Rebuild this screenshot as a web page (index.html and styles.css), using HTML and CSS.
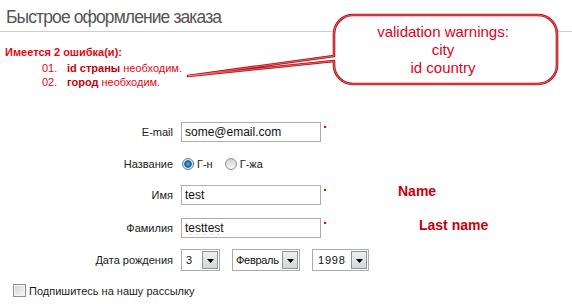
FILE: index.html
```html
<!DOCTYPE html>
<html>
<head>
    <meta charset="utf-8" />
    <title>Быстрое оформление заказа</title>
    <link rel="stylesheet" href="styles.css">
</head>
<body>
    <div class="page">
        <h1 class="title">Быстрое оформление заказа</h1>

        <div class="errors">
            <div class="errors-head">Имеется 2 ошибка(и):</div>
            <ol class="errors-list">
                <li><span class="num">01.</span><b>id страны</b> необходим.</li>
                <li><span class="num">02.</span><b>город</b> необходим.</li>
            </ol>
        </div>

        <form class="form">
            <div class="row">
                <label class="lbl">E-mail</label>
                <input class="inp" type="text" value="some@email.com">
                <span class="req"></span>
            </div>
            <div class="row row-radio">
                <label class="lbl">Название</label>
                <input class="radio" type="radio" name="title" checked>
                <span class="radio-text">Г-н</span>
                <input class="radio radio-second" type="radio" name="title">
                <span class="radio-text">Г-жа</span>
            </div>
            <div class="row">
                <label class="lbl">Имя</label>
                <input class="inp" type="text" value="test">
                <span class="req"></span>
                <span class="note note-name">Name</span>
            </div>
            <div class="row">
                <label class="lbl">Фамилия</label>
                <input class="inp inp-misspelled" type="text" value="testtest">
                <span class="req"></span>
                <span class="note note-last">Last name</span>
            </div>
            <div class="row row-date">
                <label class="lbl">Дата рождения</label>
                <span class="sel sel-day">
                    <select><option>3</option></select>
                    <span class="sel-btn"><svg width="7" height="4" viewBox="0 0 7 4"><path d="M0 0H7L3.5 4Z" fill="#000"/></svg></span>
                </span>
                <span class="sel sel-month">
                    <select class="month"><option>Февраль</option></select>
                    <span class="sel-btn"><svg width="7" height="4" viewBox="0 0 7 4"><path d="M0 0H7L3.5 4Z" fill="#000"/></svg></span>
                </span>
                <span class="sel sel-year">
                    <select class="digits"><option>1998</option></select>
                    <span class="sel-btn"><svg width="7" height="4" viewBox="0 0 7 4"><path d="M0 0H7L3.5 4Z" fill="#000"/></svg></span>
                </span>
            </div>
            <div class="subscribe">
                <input class="check" type="checkbox">
                <span>Подпишитесь на нашу рассылку</span>
            </div>
        </form>

        <!-- выноска поверх страницы -->
        <svg class="callout" viewBox="180 8 384 82">
            <path class="callout-shape" d="M353 15H538A19 19 0 0 1 557 34V65A19 19 0 0 1 538 84H353A19 19 0 0 1 334 65V61L188 76L334 56V34A19 19 0 0 1 353 15Z"/>
            <path class="callout-inner" d="M353 15H538A19 19 0 0 1 557 34V65A19 19 0 0 1 538 84H353A19 19 0 0 1 334 65V61L188 76L334 56V34A19 19 0 0 1 353 15Z"/>
            <text class="callout-text" x="443" y="37">validation warnings:</text>
            <text class="callout-text" x="443" y="55">city</text>
            <text class="callout-text" x="443" y="72.5">id country</text>
        </svg>
    </div>
</body>
</html>
```

FILE: styles.css
```css
body {
    margin: 0;
    background: #fff;
    font-family: "Liberation Sans", Arial, sans-serif;
    font-size: 11px;
    color: #1a1a1a;
}

.page {
    position: relative;
    width: 572px;
    height: 304px;
    overflow: hidden;
}

.title {
    margin: 0;
    height: 32px;
    box-sizing: border-box;
    padding: 6px 0 0 6px;
    border-bottom: 1px solid #cdcdcd;
    font-size: 17.5px;
    font-weight: normal;
    line-height: 22px;
    letter-spacing: -0.9px;
    color: #555;
}

.errors {
    margin-top: 13px;
    padding-left: 5px;
    line-height: 14px;
    color: #e30613;
}

    .errors-head {
        font-weight: bold;
        margin-bottom: 2px;
    }

.errors-list {
    list-style: none;
    margin: 0;
    padding: 0 0 0 37px;
}

    .errors-list b {
        color: #c8000a;
    }

    .errors-list .num {
        display: inline-block;
        width: 25px;
    }

.form {
    margin-top: 33px;
}

.row {
    display: flex;
    align-items: center;
    height: 20px;
}

    .row + .row {
        margin-top: 13px;
    }

.form .row-radio {
    height: 17px;
}

.form .row-date {
    height: 22px;
    margin-top: 11px;
}

.lbl {
    flex: 0 0 181px;
    box-sizing: border-box;
    padding-right: 8px;
    text-align: right;
}

.inp {
    width: 140px;
    height: 20px;
    box-sizing: border-box;
    margin: 0;
    padding: 0 3px;
    border: 1px solid #abadb3;
    font-family: "Liberation Sans", Arial, sans-serif;
    font-size: 12px;
    color: #111;
    outline: none;
}

.inp-misspelled {
    text-decoration: underline wavy #e00;
    text-underline-offset: 2px;
}

.req {
    align-self: flex-start;
    width: 2px;
    height: 2px;
    margin: 4px 0 0 3px;
    background: #e00;
}

.note {
    align-self: flex-start;
    font-size: 14px;
    font-weight: bold;
    line-height: 14px;
    color: #c8000a;
}

.note-name {
    margin: -1px 0 0 72px;
}

.note-last {
    margin: 0 0 0 93px;
}

.radio {
    -webkit-appearance: none;
    appearance: none;
    width: 12px;
    height: 12px;
    margin: 0 3px 0 1px;
    border: 1px solid #8e8f8f;
    border-radius: 50%;
    background: linear-gradient(#d2d2d2, #f8f8f8);
}

    .radio:checked {
        border-color: #3d7bad;
        background: radial-gradient(circle, #5fb2f0 0, #2a7ac4 2px, #1b4f85 3.4px, #dfe6ec 4px, #f4f6f8 6px);
    }

.radio-second {
    margin-left: 12px;
}

.sel {
    display: inline-flex;
    align-items: center;
    height: 22px;
    box-sizing: border-box;
    margin-right: 12px;
    padding: 1px;
    border: 1px solid #a5acb2;
    background: #fff;
}

    .sel select {
        -webkit-appearance: none;
        appearance: none;
        flex: 1;
        min-width: 0;
        height: 18px;
        margin: 0;
        padding: 0 0 0 3px;
        border: 0;
        background: transparent;
        font-family: "Liberation Sans", Arial, sans-serif;
        font-size: 11px;
        color: #111;
        outline: none;
    }

    .sel .month {
        padding-left: 2px;
        letter-spacing: -0.3px;
    }

    .sel .digits {
        padding-left: 4px;
        letter-spacing: 0.8px;
    }

.sel-day {
    width: 39px;
}

.sel-month {
    width: 68px;
}

.sel-year {
    width: 57px;
}

.sel-btn {
    display: flex;
    align-items: center;
    justify-content: center;
    flex: 0 0 16px;
    height: 18px;
    box-sizing: border-box;
    padding-top: 2px;
    border: 1px solid #8c959c;
    background: linear-gradient(#f0f0f0, #d6d6d6);
}

.subscribe {
    display: flex;
    align-items: center;
    margin-top: 13px;
    padding-left: 13px;
}

.check {
    -webkit-appearance: none;
    appearance: none;
    width: 13px;
    height: 13px;
    margin: 0 3px 0 0;
    border: 1px solid #8e8f8f;
    background: linear-gradient(135deg, #d4d4d4, #f7f7f7);
    box-shadow: inset 0 0 0 1px #f4f4f4;
}

.callout {
    position: absolute;
    left: 180px;
    top: 8px;
    width: 384px;
    height: 82px;
}

.callout-shape {
    fill: #fff;
    stroke: #c0000c;
    stroke-width: 2.6;
    stroke-linejoin: round;
}

.callout-inner {
    fill: none;
    stroke: #fff;
    stroke-width: 0.6;
    stroke-opacity: 0.7;
}

.callout-text {
    font-family: "Liberation Sans", Arial, sans-serif;
    font-size: 15px;
    fill: #e0001b;
    text-anchor: middle;
}
```
